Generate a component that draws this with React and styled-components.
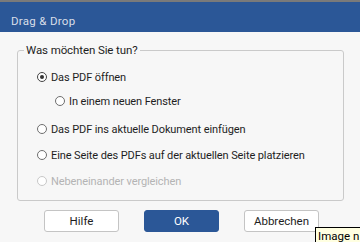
import React from "react";
import styled, { createGlobalStyle } from "styled-components";

const Global = createGlobalStyle`
  html, body { margin: 0; padding: 0; }
  body {
    width: 360px;
    height: 242px;
    overflow: hidden;
    background: #f7f7f7;
    font-family: Roboto, "Liberation Sans", Arial, sans-serif;
  }
`;

const Window = styled.div`
  position: relative;
  width: 360px;
  height: 242px;
  background: #f7f7f7;
  display: flex;
  flex-direction: column;
`;

const TitleBar = styled.div`
  box-sizing: border-box;
  height: 32px;
  border-top: 2px solid #7a7a7a;
  background: #2b5797;
  color: #d9dee8;
  font-size: 11.5px;
  line-height: 14px;
  padding: 12px 0 0 11px;
  letter-spacing: 0.3px;
`;

const Group = styled.fieldset`
  margin: 11px 0 0 17px;
  width: 327px;
  box-sizing: border-box;
  height: 158px;
  border: 1px solid #cacaca;
  border-radius: 3px;
  padding: 0 0 0 6px;
  display: flex;
  flex-direction: column;
`;

const Legend = styled.legend`
  padding: 0 2px;
  font-size: 11.5px;
  letter-spacing: -0.1px;
  color: #1e1e1e;
  line-height: 14px;
`;

const Option = styled.label`
  display: flex;
  align-items: center;
  gap: 4px;
  height: 14px;
  margin-top: ${(p) => p.$top}px;
  margin-left: ${(p) => p.$indent}px;
  font-size: 11px;
  letter-spacing: -0.1px;
  color: ${(p) => (p.$disabled ? "#b4b4b4" : "#1e1e1e")};
`;

const Radio = styled.span`
  width: 10px;
  height: 10px;
  box-sizing: border-box;
  border-radius: 50%;
  border: 1px solid ${(p) => (p.$disabled ? "#c8c8c8" : p.$checked ? "#444" : "#6e6e6e")};
  background: #fff;
  display: flex;
  align-items: center;
  justify-content: center;
  flex: none;
  &::after {
    content: "";
    width: 4px;
    height: 4px;
    border-radius: 50%;
    background: ${(p) => (p.$checked ? "#333" : "transparent")};
  }
`;

const Buttons = styled.div`
  display: flex;
  margin: 9px 0 0 44px;
  gap: 25px;
`;

const Button = styled.button`
  width: 75px;
  height: 22px;
  box-sizing: border-box;
  border-radius: 3px;
  font-family: inherit;
  font-size: 11.5px;
  padding: 0;
  border: 1px solid ${(p) => (p.$primary ? "#2b5797" : "#c4c4c4")};
  background: ${(p) => (p.$primary ? "#2b5797" : "#ffffff")};
  color: ${(p) => (p.$primary ? "#ffffff" : "#1e1e1e")};
`;

const Tooltip = styled.div`
  position: absolute;
  left: 315px;
  right: 0;
  top: 227px;
  bottom: 0;
  padding: 1px 0 0 2px;
  border: 1px solid #000;
  border-right: none;
  border-bottom: none;
  background: #ffffe1;
  color: #000;
  font-size: 11.5px;
  white-space: nowrap;
  overflow: hidden;
  line-height: 15px;
`;

const options = [
  { text: "Das PDF öffnen", checked: true, top: 13, indent: 13 },
  { text: "In einem neuen Fenster", top: 10, indent: 31 },
  { text: "Das PDF ins aktuelle Dokument einfügen", top: 14, indent: 13 },
  { text: "Eine Seite des PDFs auf der aktuellen Seite platzieren", top: 12, indent: 13 },
  { text: "Nebeneinander vergleichen", disabled: true, top: 12, indent: 13 },
];

export default function App() {
  return (
    <Window>
      <Global />
      <TitleBar>Drag &amp; Drop</TitleBar>
      <Group>
        <Legend>Was möchten Sie tun?</Legend>
        {options.map((o) => (
          <Option key={o.text} $top={o.top} $indent={o.indent} $disabled={o.disabled}>
            <Radio $checked={o.checked} $disabled={o.disabled} />
            {o.text}
          </Option>
        ))}
      </Group>
      <Buttons>
        <Button>Hilfe</Button>
        <Button $primary>OK</Button>
        <Button>Abbrechen</Button>
      </Buttons>
      <Tooltip>Image n</Tooltip>
    </Window>
  );
}
